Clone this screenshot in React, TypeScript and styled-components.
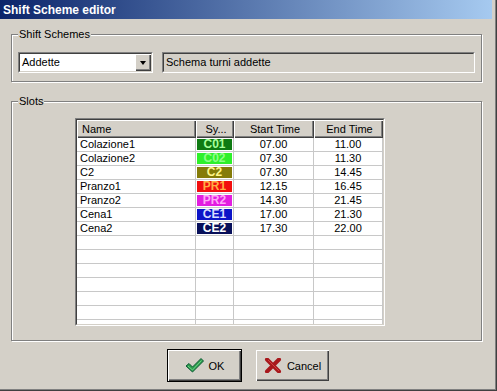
import React from "react";
import styled, { createGlobalStyle } from "styled-components";

const Global = createGlobalStyle`
  html, body { margin: 0; padding: 0; background: #d4d0c8; }
  body { font-family: "Liberation Sans", Arial, sans-serif; font-size: 11px; color: #000; }
  * { box-sizing: border-box; }
`;

const Window = styled.div`
  width: 497px;
  height: 391px;
  background: #d4d0c8;
  display: flex;
  flex-direction: column;
  box-shadow: inset -1px -1px 0 #404040, inset -2px -2px 0 #808080;
  overflow: hidden;
`;

const TitleBar = styled.div`
  height: 19px;
  margin-right: 5px;
  padding: 1px 0 0 3px;
  display: flex;
  align-items: center;
  background: linear-gradient(to right, #0a246a, #a6caf0);
  color: #fff;
  font-weight: bold;
  font-size: 12px;
  line-height: 18px;
  white-space: nowrap;
`;

const Body = styled.div`
  flex: 1;
  display: flex;
  flex-direction: column;
  padding: 9px 15px 0 11px;
`;

const Group = styled.fieldset<{ $mt?: number; $pt: number; $pb: number }>`
  margin: ${(p) => p.$mt ?? 0}px 0 0 0;
  width: 471px;
  padding: ${(p) => p.$pt}px 6px ${(p) => p.$pb}px 6px;
  border: 1px solid #808080;
  box-shadow: inset 1px 1px 0 #fff, 1px 1px 0 #fff;
  min-width: 0;
`;

const Legend = styled.legend`
  padding: 0 1px;
  margin: 0;
  line-height: 13px;
  font-size: 11px;
  background: #d4d0c8;
`;

const SchemeRow = styled.div`
  display: flex;
  gap: 9px;
  height: 21px;
`;

const SunkenOuter = styled.div<{ $w?: number; $grow?: boolean }>`
  ${(p) => (p.$w ? `width: ${p.$w}px;` : "")}
  ${(p) => (p.$grow ? "flex: 1;" : "")}
  border: 1px solid;
  border-color: #808080 #fff #fff #808080;
  display: flex;
`;

const SunkenInner = styled.div<{ $bg: string }>`
  flex: 1;
  min-width: 0;
  border: 1px solid;
  border-color: #404040 #d4d0c8 #d4d0c8 #404040;
  background: ${(p) => p.$bg};
  display: flex;
  align-items: center;
  overflow: hidden;
`;

const FieldText = styled.span`
  flex: 1;
  padding-left: 2px;
  line-height: 17px;
  white-space: nowrap;
`;

const DropButton = styled.div`
  width: 16px;
  height: 17px;
  background: #d4d0c8;
  box-shadow: inset 1px 1px 0 #fff, inset -1px -1px 0 #404040, inset -2px -2px 0 #808080;
  display: flex;
  align-items: center;
  justify-content: center;
  padding-right: 1px;
`;

const Arrow = styled.div`
  width: 0;
  height: 0;
  border-left: 3.5px solid transparent;
  border-right: 3.5px solid transparent;
  border-top: 4px solid #000;
`;

const GridWrap = styled.div`
  margin-left: 57px;
  width: 310px;
  height: 208px;
  border: 1px solid;
  border-color: #808080 #fff #fff #808080;
  display: flex;
`;

const GridInner = styled.div`
  flex: 1;
  border: 1px solid;
  border-color: #404040 #d4d0c8 #d4d0c8 #404040;
  background: #fff;
  overflow: hidden;
  display: flex;
  flex-direction: column;
`;

const COLS = "119px 38px 80px 69px";

const HeaderRow = styled.div`
  display: grid;
  grid-template-columns: ${COLS};
  height: 18px;
  flex-shrink: 0;
`;

const HeaderCell = styled.div<{ $align: string }>`
  background: #d4d0c8;
  box-shadow: inset 1px 1px 0 #fff, inset -1px -1px 0 #404040, inset -2px -2px 0 #808080;
  display: flex;
  align-items: center;
  justify-content: ${(p) => p.$align};
  padding: 0 3px 1px 5px;
  line-height: 16px;
  white-space: nowrap;
`;

const Row = styled.div`
  display: grid;
  grid-template-columns: ${COLS};
  height: 14px;
  flex-shrink: 0;
`;

const Cell = styled.div<{ $align: string }>`
  border-right: 1px solid #c8c8c8;
  border-bottom: 1px solid #c8c8c8;
  display: flex;
  align-items: center;
  justify-content: ${(p) => p.$align};
  padding-left: ${(p) => (p.$align === "flex-start" ? 3 : 0)}px;
  line-height: 13px;
  white-space: nowrap;
  overflow: hidden;
`;

const SymbolCell = styled.div`
  border-right: 1px solid #c8c8c8;
  border-bottom: 1px solid #c8c8c8;
  padding: 1px;
  display: flex;
`;

const Symbol = styled.div<{ $bg: string; $fg: string }>`
  flex: 1;
  background: ${(p) => p.$bg};
  color: ${(p) => p.$fg};
  font-weight: bold;
  font-size: 12px;
  line-height: 11px;
  display: flex;
  align-items: center;
  justify-content: center;
`;

const ButtonRow = styled.div`
  display: flex;
  justify-content: center;
  gap: 13px;
  margin-top: 8px;
  padding-left: 4px;
`;

const Button = styled.button<{ $default?: boolean }>`
  width: 75px;
  height: 33px;
  padding: 0;
  margin: 0;
  font-family: "Liberation Sans", Arial, sans-serif;
  font-size: 11px;
  color: #000;
  background: #d4d0c8;
  border: 1px solid ${(p) => (p.$default ? "#000" : "#d4d0c8")};
  box-shadow: inset 1px 1px 0 #fff, inset -1px -1px 0 #404040, inset -2px -2px 0 #808080;
  display: flex;
  align-items: center;
  justify-content: center;
  gap: 5px;
`;

const slots = [
  { name: "Colazione1", sym: "C01", bg: "#0e7a12", fg: "#a8ff9c", s: "07.00", e: "11.00" },
  { name: "Colazione2", sym: "C02", bg: "#2ef02a", fg: "#8cff86", s: "07.30", e: "11.30" },
  { name: "C2", sym: "C2", bg: "#857c08", fg: "#fff78a", s: "07.30", e: "14.45" },
  { name: "Pranzo1", sym: "PR1", bg: "#f20e0e", fg: "#ffae44", s: "12.15", e: "16.45" },
  { name: "Pranzo2", sym: "PR2", bg: "#e21ee0", fg: "#ffa8f8", s: "14.30", e: "21.45" },
  { name: "Cena1", sym: "CE1", bg: "#0c14c8", fg: "#d8dcff", s: "17.00", e: "21.30" },
  { name: "Cena2", sym: "CE2", bg: "#08105a", fg: "#ffffff", s: "17.30", e: "22.00" },
];

const CheckIcon = () => (
  <svg width="19" height="15" viewBox="0 0 19 15">
    <polygon points="1,8 4,5.5 7.5,9 16,0.5 18.5,3 7.5,14" fill="#2c9c4c" stroke="#0e5a36" strokeWidth="1" strokeLinejoin="round" />
    <polyline points="3,8 7.5,12 16.5,2.5" fill="none" stroke="#6fd28a" strokeWidth="1" />
  </svg>
);

const CrossIcon = () => (
  <svg width="18" height="15" viewBox="0 0 18 15">
    <path d="M3 1.5 L15 13.5 M15 1.5 L3 13.5" stroke="#a8181c" strokeWidth="4" strokeLinecap="round" />
    <path d="M4 2 L15 13" stroke="#d24040" strokeWidth="1" />
  </svg>
);

export default function App() {
  const emptyRows = Array.from({ length: 7 });
  return (
    <Window>
      <Global />
      <TitleBar>Shift Scheme editor</TitleBar>
      <Body>
        <Group $pt={11} $pb={8}>
          <Legend>Shift Schemes</Legend>
          <SchemeRow>
            <SunkenOuter $w={135}>
              <SunkenInner $bg="#fff">
                <FieldText>Addette</FieldText>
                <DropButton>
                  <Arrow />
                </DropButton>
              </SunkenInner>
            </SunkenOuter>
            <SunkenOuter $grow>
              <SunkenInner $bg="#d4d0c8">
                <FieldText>Schema turni addette</FieldText>
              </SunkenInner>
            </SunkenOuter>
          </SchemeRow>
        </Group>
        <Group $mt={13} $pt={10} $pb={14}>
          <Legend>Slots</Legend>
          <GridWrap>
            <GridInner>
              <HeaderRow>
                <HeaderCell $align="flex-start">Name</HeaderCell>
                <HeaderCell $align="center">Sy...</HeaderCell>
                <HeaderCell $align="center">Start Time</HeaderCell>
                <HeaderCell $align="center">End Time</HeaderCell>
              </HeaderRow>
              {slots.map((r) => (
                <Row key={r.name}>
                  <Cell $align="flex-start">{r.name}</Cell>
                  <SymbolCell>
                    <Symbol $bg={r.bg} $fg={r.fg}>{r.sym}</Symbol>
                  </SymbolCell>
                  <Cell $align="center">{r.s}</Cell>
                  <Cell $align="center">{r.e}</Cell>
                </Row>
              ))}
              {emptyRows.map((_, i) => (
                <Row key={"e" + i}>
                  <Cell $align="flex-start" />
                  <Cell $align="center" />
                  <Cell $align="center" />
                  <Cell $align="center" />
                </Row>
              ))}
            </GridInner>
          </GridWrap>
        </Group>
        <ButtonRow>
          <Button $default>
            <CheckIcon />
            <span>OK</span>
          </Button>
          <Button>
            <CrossIcon />
            <span>Cancel</span>
          </Button>
        </ButtonRow>
      </Body>
    </Window>
  );
}
